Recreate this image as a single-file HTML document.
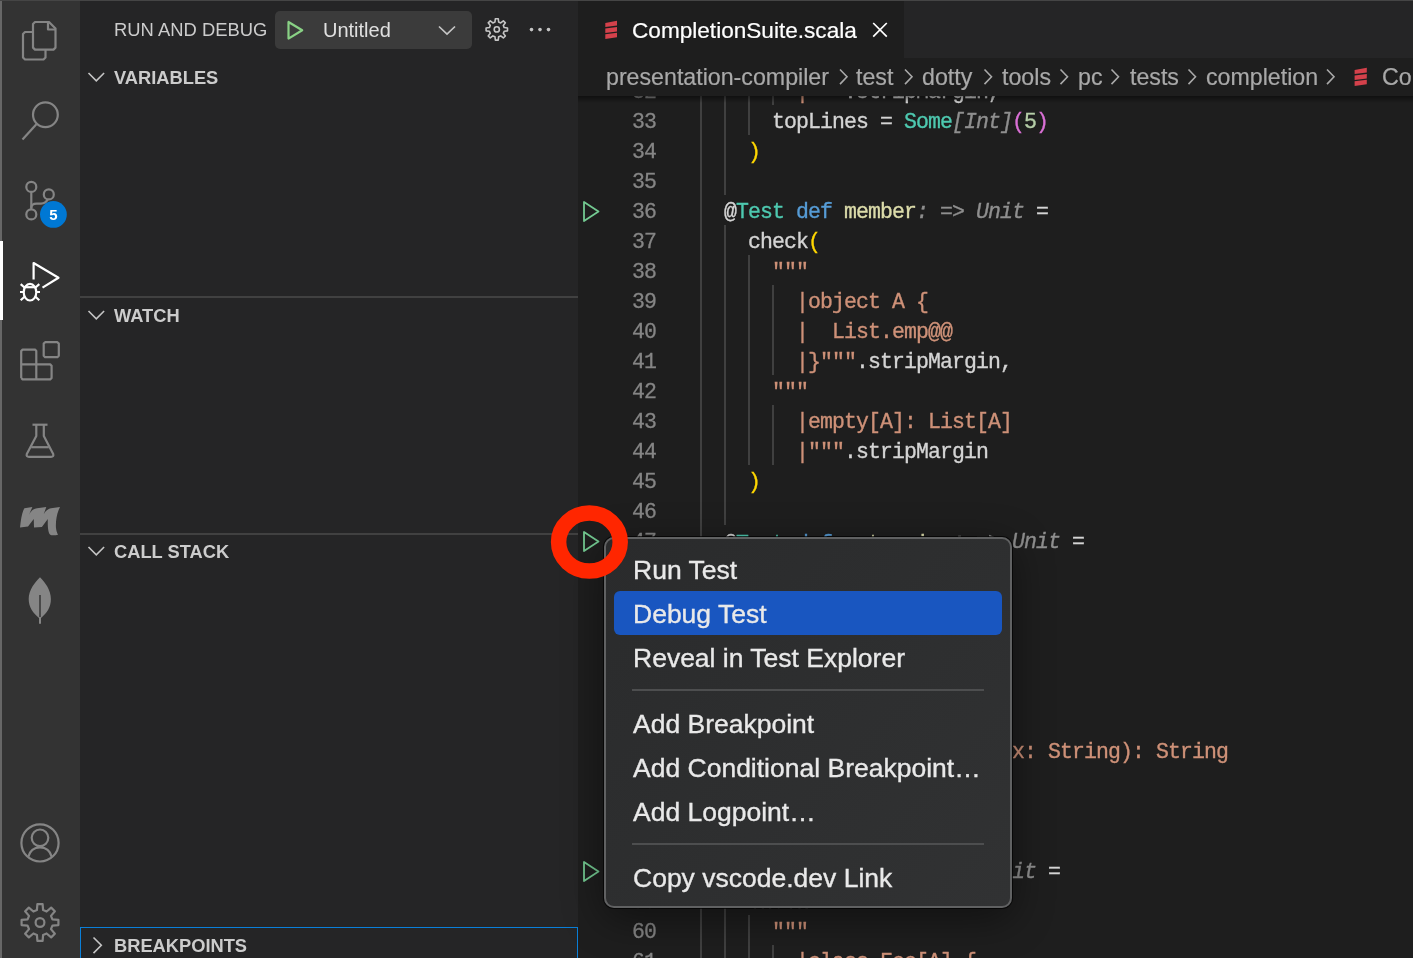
<!DOCTYPE html>
<html><head><meta charset="utf-8"><style>
*{margin:0;padding:0;box-sizing:border-box}
html,body{width:1413px;height:958px;overflow:hidden;background:#1e1e1e;font-family:"Liberation Sans",sans-serif;-webkit-font-smoothing:antialiased}
.a{position:absolute;white-space:pre;will-change:transform}
#act{left:0;top:0;width:80px;height:958px;background:#333333}
#actl{left:0;top:0;width:2px;height:958px;background:#676767}
#topl{left:0;top:0;width:1413px;height:1px;background:#454545;z-index:50}
#side{left:80px;top:0;width:498px;height:958px;background:#252526}
.hdr{font-weight:bold;color:#cccccc}
.sep{left:80px;width:498px;height:2px;background:#414141}
#tabs{left:578px;top:0;width:835px;height:58px;background:#252526}
#tab{left:578px;top:0;width:326px;height:58px;background:#1e1e1e}
#crumbs{left:578px;top:58px;width:835px;height:38px;background:#1e1e1e;z-index:3}
#shadow{left:578px;top:96px;width:835px;height:7px;z-index:3;background:linear-gradient(rgba(0,0,0,0.45),rgba(0,0,0,0))}
.bc{color:#a9a9a9;z-index:4;-webkit-text-stroke:0.2px currentColor}
.code{font-family:"Liberation Mono",monospace;color:#d4d4d4;-webkit-text-stroke:0.35px currentColor}
.ln{font-family:"Liberation Mono",monospace;color:#858585;-webkit-text-stroke:0.3px currentColor}
.g{width:2px;background:#404040;position:absolute}
.k{color:#569cd6}.t{color:#4ec9b0}.f{color:#dcdcaa}.s{color:#ce9178}.h{color:#8f8f8f;font-style:italic}.y{color:#ffd700}.p{color:#da70d6}.n{color:#b5cea8}
#menu{left:604px;top:537px;width:408px;height:371px;background:#2b2c2d;border:2px solid #606162;border-radius:10px;z-index:10;box-shadow:0 0 0 1px rgba(0,0,0,0.7),0 10px 40px rgba(0,0,0,0.45);background:linear-gradient(135deg,#2a2b2c,#313233)}
.mi{color:#e9e9e9;z-index:11;-webkit-text-stroke:0.35px currentColor}
.msep{width:352px;height:2px;background:#4d4e4f;z-index:11;position:absolute}
</style></head><body>
<div class="a" id="act"></div><div class="a" id="actl"></div><div class="a" id="topl"></div>
<div class="a" style="left:0;top:241px;width:3px;height:79px;background:#ffffff;z-index:2"></div>
<svg class="a" style="left:0;top:0;z-index:3" width="80" height="958" viewBox="0 0 80 958" fill="none" stroke="#858585" stroke-width="2.2" stroke-linejoin="round">
<!-- files -->
<path d="M33 24 L35 22 L49 22 L55.5 28.5 L55.5 47.6 L53.5 49.6 L35 49.6 L33 47.6 Z"/>
<path d="M48 22 L48 29.5 L55.5 29.5"/>
<path d="M33 32 L25 32 L23 34 L23 57.5 L25 59.5 L43.5 59.5 L45.5 57.5 L45.5 49.6"/>
<!-- search -->
<circle cx="45.4" cy="114.7" r="12.4"/>
<path d="M36.6 124 L22.5 139.4" stroke-linecap="butt"/>
<!-- scm -->
<circle cx="31.3" cy="186.9" r="5"/>
<circle cx="48.8" cy="194.4" r="5"/>
<circle cx="31.3" cy="214.4" r="5"/>
<path d="M31.3 191.9 L31.3 209.4"/>
<path d="M31.3 208 C31.3 205 33.5 203.6 36.5 203.6 L41 203.6 C44.5 203.6 46.5 202 47.8 199.3"/>
<!-- debug (active) -->
<g stroke="#ffffff">
<path d="M33.6 279.5 L33.6 263 L58.5 277.8 L42.5 287.6" stroke-linejoin="round"/>
<ellipse cx="30" cy="292.2" rx="6.3" ry="8.3"/>
<path d="M23.7 287.2 L36.3 287.2"/>
<path d="M20 292 L23.7 292 M36.3 292 L40 292"/>
<path d="M20.7 284.2 L24.5 287.5 M39.3 284.2 L35.5 287.5"/>
<path d="M20.7 300.2 L24.5 296.8 M39.3 300.2 L35.5 296.8"/>
</g>
<!-- extensions -->
<path d="M21.2 378 L21.2 351 L22.6 349.6 L35 349.6 L36.3 351 L36.3 379.4 M21.2 364.4 L50.2 364.4 L51.6 365.8 L51.6 378 L50.2 379.4 L22.6 379.4 L21.2 378"/>
<path d="M43.7 343.6 L45.1 342.2 L57.4 342.2 L58.8 343.6 L58.8 355.8 L57.4 357.2 L45.1 357.2 L43.7 355.8 Z"/>
<!-- beaker -->
<path d="M32.5 424.7 L47.5 424.7" stroke-linecap="butt"/>
<path d="M36.3 425 L36.3 436 L26.8 454 Q26 456.9 29 456.9 L51 456.9 Q54 456.9 53.2 454 L43.8 436 L43.8 425"/>
<path d="M31.2 447.2 L48.8 447.2"/>
<!-- account -->
<circle cx="40" cy="842.9" r="18.6"/>
<circle cx="40" cy="837.8" r="8.3"/>
<path d="M28.2 857 C30 850 34.5 847.3 40 847.3 C45.5 847.3 50 850 51.8 857"/>
</g>
<path d="M36.91 910.08 L37.38 904.09 L42.62 904.09 L43.09 910.08 L46.60 911.53 L51.17 907.63 L54.87 911.33 L50.97 915.90 L52.42 919.41 L58.41 919.88 L58.41 925.12 L52.42 925.59 L50.97 929.10 L54.87 933.67 L51.17 937.37 L46.60 933.47 L43.09 934.92 L42.62 940.91 L37.38 940.91 L36.91 934.92 L33.40 933.47 L28.83 937.37 L25.13 933.67 L29.03 929.10 L27.58 925.59 L21.59 925.12 L21.59 919.88 L27.58 919.41 L29.03 915.90 L25.13 911.33 L28.83 907.63 L33.40 911.53 Z"/>
<circle cx="40" cy="922.5" r="4.4"/>
<!-- metals -->
<path fill="#858585" stroke="none" d="M20 527.5 C21 519 22 512 24.4 508.2 L32.4 506.9 L29 514.7 C31 511 33 509 37 508.3 L46.3 506.9 L43.8 514 C45.5 511 47.5 509 51 508.2 L60 506.9 C56.5 514 55.5 522 56 528 C56.3 531 57 533 58 534.7 C55 535.6 51.5 535.6 50 534.5 C48 532.5 47.6 526 47.8 519 L41.9 526.9 L34 527.5 L33.75 519 L28 526.6 Z"/>
<!-- leaf -->
<path fill="#858585" stroke="none" d="M40 577.2 C35 582 28.7 590 28.7 599 C28.7 607 33 613 39 618 L39 623.8 L41 623.8 L41 618 C47 613 50.9 607 50.9 599 C50.9 590 45 582 40 577.2 Z"/>
<path d="M40 595 L40 617" stroke="#3a3a3a" stroke-width="1.6"/>
<!-- badge -->
<circle cx="53.4" cy="214.4" r="13.4" fill="#0078d4" stroke="none"/>
<text x="53.4" y="219.8" fill="#ffffff" stroke="none" font-family="Liberation Sans" font-weight="bold" font-size="15" text-anchor="middle">5</text>
</svg>

<div class="a" id="side"></div>
<div class="a " style="left:114px;top:21.22px;font-size:18.4px;line-height:18.4px;color:#cccccc">RUN AND DEBUG</div>
<div class="a" style="left:275px;top:11px;width:197px;height:38px;background:#3b3b3b;border-radius:5px"></div>
<div class="a " style="left:322.5px;top:19.87px;font-size:20px;line-height:20px;color:#e0e0e0">Untitled</div>
<svg class="a" style="left:80px;top:0;z-index:3" width="498" height="958" viewBox="80 0 498 958" fill="none" stroke="#c5c5c5" stroke-width="1.6" stroke-linejoin="miter">
<path d="M288.5 22 L288.5 38.6 L302.2 30.3 Z" stroke="#89d185" stroke-width="2.2" stroke-linejoin="round"/>
<path d="M439 26.5 L447 34 L455 26.5" stroke="#c5c5c5" stroke-width="1.7"/>
<path d="M494.97 22.02 L495.36 18.70 L498.24 18.70 L498.63 22.02 L500.72 22.89 L503.35 20.81 L505.39 22.85 L503.31 25.48 L504.18 27.57 L507.50 27.96 L507.50 30.84 L504.18 31.23 L503.31 33.32 L505.39 35.95 L503.35 37.99 L500.72 35.91 L498.63 36.78 L498.24 40.10 L495.36 40.10 L494.97 36.78 L492.88 35.91 L490.25 37.99 L488.21 35.95 L490.29 33.32 L489.42 31.23 L486.10 30.84 L486.10 27.96 L489.42 27.57 L490.29 25.48 L488.21 22.85 L490.25 20.81 L492.88 22.89 Z" stroke="#c5c5c5" stroke-width="1.6" stroke-linejoin="round"/>
<circle cx="496.8" cy="29.4" r="2.6" stroke-width="1.6"/>
<circle cx="531.5" cy="29.6" r="1.8" fill="#c5c5c5" stroke="none"/>
<circle cx="540" cy="29.6" r="1.8" fill="#c5c5c5" stroke="none"/>
<circle cx="548.5" cy="29.6" r="1.8" fill="#c5c5c5" stroke="none"/>
<path d="M88.5 73 L96.3 80.8 L104.1 73"/>
<path d="M88.5 311 L96.3 318.8 L104.1 311"/>
<path d="M88.5 547 L96.3 554.8 L104.1 547"/>
<path d="M93.5 937.5 L101.3 945.3 L93.5 953.1"/>
</svg>

<div class="a hdr" style="left:114px;top:68.51px;font-size:18.3px;line-height:18.3px;">VARIABLES</div>
<div class="a sep" style="top:296px"></div>
<div class="a hdr" style="left:114px;top:306.51px;font-size:18.3px;line-height:18.3px;">WATCH</div>
<div class="a sep" style="top:533px"></div>
<div class="a hdr" style="left:114px;top:542.51px;font-size:18.3px;line-height:18.3px;">CALL STACK</div>
<div class="a" style="left:80px;top:927px;width:498px;height:40px;border:1.6px solid #0a7fd8"></div>
<div class="a hdr" style="left:114px;top:936.51px;font-size:18.3px;line-height:18.3px;">BREAKPOINTS</div>
<div class="a" id="tabs"></div><div class="a" id="tab"></div>
<div class="a " style="left:632px;top:20.07px;font-size:22.6px;line-height:22.6px;color:#ffffff;-webkit-text-stroke:0.2px #ffffff">CompletionSuite.scala</div>
<div class="a" id="crumbs"></div><div class="a" id="shadow"></div>
<div class="a bc" style="left:605.5px;top:65.96px;font-size:23.2px;line-height:23.2px;">presentation-compiler</div>
<div class="a bc" style="left:856.4px;top:65.96px;font-size:23.2px;line-height:23.2px;">test</div>
<div class="a bc" style="left:921.5px;top:65.96px;font-size:23.2px;line-height:23.2px;">dotty</div>
<div class="a bc" style="left:1001.5px;top:65.96px;font-size:23.2px;line-height:23.2px;">tools</div>
<div class="a bc" style="left:1077.5px;top:65.96px;font-size:23.2px;line-height:23.2px;">pc</div>
<div class="a bc" style="left:1129.6px;top:65.96px;font-size:23.2px;line-height:23.2px;">tests</div>
<div class="a bc" style="left:1205.9px;top:65.96px;font-size:23.2px;line-height:23.2px;">completion</div>
<div class="a bc" style="left:1381.5px;top:65.96px;font-size:23.2px;line-height:23.2px;">CompletionSuite.scala</div>
<svg class="a" style="left:578px;top:0;z-index:4" width="835" height="958" viewBox="578 0 835 958" fill="none" stroke="#c5c5c5" stroke-width="1.6">
<g fill="#d4414b" stroke="none">
<path d="M605.3 23.1 L617 20.8 L617 25.6 L605.3 27.1 Z"/>
<path d="M605.3 28.5 L617 26.9 L617 31.5 L605.3 32.9 Z"/>
<path d="M605.3 34.2 L617 32.8 L617 37.3 L605.3 38.9 Z"/>
</g>
<path d="M873.2 23 L886.8 36.6 M886.8 23 L873.2 36.6" stroke="#ffffff" stroke-width="1.7"/>
<g stroke="#a9a9a9" stroke-width="1.6">
<path d="M840 69.5 L847 76.8 L840 84.1"/>
<path d="M905 69.5 L912 76.8 L905 84.1"/>
<path d="M984.5 69.5 L991.5 76.8 L984.5 84.1"/>
<path d="M1060.5 69.5 L1067.5 76.8 L1060.5 84.1"/>
<path d="M1111.5 69.5 L1118.5 76.8 L1111.5 84.1"/>
<path d="M1188.5 69.5 L1195.5 76.8 L1188.5 84.1"/>
<path d="M1327 69.5 L1334 76.8 L1327 84.1"/>
</g>
<g fill="#d4414b" stroke="none">
<path d="M1354.6 70.1 L1366.8 67.8 L1366.8 72.6 L1354.6 74.1 Z"/>
<path d="M1354.6 75.5 L1366.8 73.9 L1366.8 78.5 L1354.6 79.9 Z"/>
<path d="M1354.6 81.2 L1366.8 79.8 L1366.8 84.3 L1354.6 85.9 Z"/>
</g>
</svg>
<svg class="a" style="left:578px;top:0;z-index:2" width="80" height="958" viewBox="578 0 80 958" fill="none" stroke="#73c991" stroke-width="1.8" stroke-linejoin="round">
<path d="M584 202 L584 221 L598.5 211.5 Z"/>
<path d="M584 532 L584 551 L598.5 541.5 Z"/>
<path d="M584 862 L584 881 L598.5 871.5 Z"/>
</svg>

<div class="g" style="left:700px;top:75px;height:30px"></div>
<div class="g" style="left:724px;top:75px;height:30px"></div>
<div class="g" style="left:748px;top:75px;height:30px"></div>
<div class="g" style="left:772px;top:75px;height:30px"></div>
<div class="g" style="left:700px;top:105px;height:30px"></div>
<div class="g" style="left:724px;top:105px;height:30px"></div>
<div class="g" style="left:748px;top:105px;height:30px"></div>
<div class="g" style="left:700px;top:135px;height:30px"></div>
<div class="g" style="left:724px;top:135px;height:30px"></div>
<div class="g" style="left:700px;top:165px;height:30px"></div>
<div class="g" style="left:724px;top:165px;height:30px"></div>
<div class="g" style="left:700px;top:195px;height:30px"></div>
<div class="g" style="left:700px;top:225px;height:30px"></div>
<div class="g" style="left:724px;top:225px;height:30px"></div>
<div class="g" style="left:700px;top:255px;height:30px"></div>
<div class="g" style="left:724px;top:255px;height:30px"></div>
<div class="g" style="left:748px;top:255px;height:30px"></div>
<div class="g" style="left:700px;top:285px;height:30px"></div>
<div class="g" style="left:724px;top:285px;height:30px"></div>
<div class="g" style="left:748px;top:285px;height:30px"></div>
<div class="g" style="left:772px;top:285px;height:30px"></div>
<div class="g" style="left:700px;top:315px;height:30px"></div>
<div class="g" style="left:724px;top:315px;height:30px"></div>
<div class="g" style="left:748px;top:315px;height:30px"></div>
<div class="g" style="left:772px;top:315px;height:30px"></div>
<div class="g" style="left:700px;top:345px;height:30px"></div>
<div class="g" style="left:724px;top:345px;height:30px"></div>
<div class="g" style="left:748px;top:345px;height:30px"></div>
<div class="g" style="left:772px;top:345px;height:30px"></div>
<div class="g" style="left:700px;top:375px;height:30px"></div>
<div class="g" style="left:724px;top:375px;height:30px"></div>
<div class="g" style="left:748px;top:375px;height:30px"></div>
<div class="g" style="left:700px;top:405px;height:30px"></div>
<div class="g" style="left:724px;top:405px;height:30px"></div>
<div class="g" style="left:748px;top:405px;height:30px"></div>
<div class="g" style="left:772px;top:405px;height:30px"></div>
<div class="g" style="left:700px;top:435px;height:30px"></div>
<div class="g" style="left:724px;top:435px;height:30px"></div>
<div class="g" style="left:748px;top:435px;height:30px"></div>
<div class="g" style="left:772px;top:435px;height:30px"></div>
<div class="g" style="left:700px;top:465px;height:30px"></div>
<div class="g" style="left:724px;top:465px;height:30px"></div>
<div class="g" style="left:700px;top:495px;height:30px"></div>
<div class="g" style="left:724px;top:495px;height:30px"></div>
<div class="g" style="left:700px;top:525px;height:30px"></div>
<div class="g" style="left:700px;top:555px;height:30px"></div>
<div class="g" style="left:724px;top:555px;height:30px"></div>
<div class="g" style="left:700px;top:585px;height:30px"></div>
<div class="g" style="left:724px;top:585px;height:30px"></div>
<div class="g" style="left:748px;top:585px;height:30px"></div>
<div class="g" style="left:700px;top:615px;height:30px"></div>
<div class="g" style="left:724px;top:615px;height:30px"></div>
<div class="g" style="left:748px;top:615px;height:30px"></div>
<div class="g" style="left:772px;top:615px;height:30px"></div>
<div class="g" style="left:700px;top:645px;height:30px"></div>
<div class="g" style="left:724px;top:645px;height:30px"></div>
<div class="g" style="left:748px;top:645px;height:30px"></div>
<div class="g" style="left:772px;top:645px;height:30px"></div>
<div class="g" style="left:700px;top:675px;height:30px"></div>
<div class="g" style="left:724px;top:675px;height:30px"></div>
<div class="g" style="left:748px;top:675px;height:30px"></div>
<div class="g" style="left:772px;top:675px;height:30px"></div>
<div class="g" style="left:700px;top:705px;height:30px"></div>
<div class="g" style="left:724px;top:705px;height:30px"></div>
<div class="g" style="left:748px;top:705px;height:30px"></div>
<div class="g" style="left:772px;top:705px;height:30px"></div>
<div class="g" style="left:700px;top:735px;height:30px"></div>
<div class="g" style="left:724px;top:735px;height:30px"></div>
<div class="g" style="left:748px;top:735px;height:30px"></div>
<div class="g" style="left:772px;top:735px;height:30px"></div>
<div class="g" style="left:700px;top:765px;height:30px"></div>
<div class="g" style="left:724px;top:765px;height:30px"></div>
<div class="g" style="left:748px;top:765px;height:30px"></div>
<div class="g" style="left:772px;top:765px;height:30px"></div>
<div class="g" style="left:700px;top:855px;height:30px"></div>
<div class="g" style="left:700px;top:885px;height:30px"></div>
<div class="g" style="left:724px;top:885px;height:30px"></div>
<div class="g" style="left:700px;top:915px;height:30px"></div>
<div class="g" style="left:724px;top:915px;height:30px"></div>
<div class="g" style="left:748px;top:915px;height:30px"></div>
<div class="g" style="left:700px;top:945px;height:30px"></div>
<div class="g" style="left:724px;top:945px;height:30px"></div>
<div class="g" style="left:748px;top:945px;height:30px"></div>
<div class="g" style="left:772px;top:945px;height:30px"></div>
<div class="a ln" style="left:632.0px;top:81.93px;font-size:21.5px;line-height:21.5px;letter-spacing:-0.90px">32</div>
<div class="a code s" style="left:795.55px;top:81.93px;font-size:21.5px;line-height:21.5px;letter-spacing:-0.90px">|</div>
<div class="a code s" style="left:807.55px;top:81.93px;font-size:21.5px;line-height:21.5px;letter-spacing:-0.90px">"""</div>
<div class="a code " style="left:843.55px;top:81.93px;font-size:21.5px;line-height:21.5px;letter-spacing:-0.90px">.stripMargin,</div>
<div class="a ln" style="left:632.0px;top:111.93px;font-size:21.5px;line-height:21.5px;letter-spacing:-0.90px">33</div>
<div class="a code " style="left:771.55px;top:111.93px;font-size:21.5px;line-height:21.5px;letter-spacing:-0.90px">topLines = </div>
<div class="a code t" style="left:903.55px;top:111.93px;font-size:21.5px;line-height:21.5px;letter-spacing:-0.90px">Some</div>
<div class="a code h" style="left:951.55px;top:111.93px;font-size:21.5px;line-height:21.5px;letter-spacing:-0.90px">[Int]</div>
<div class="a code p" style="left:1011.55px;top:111.93px;font-size:21.5px;line-height:21.5px;letter-spacing:-0.90px">(</div>
<div class="a code n" style="left:1023.55px;top:111.93px;font-size:21.5px;line-height:21.5px;letter-spacing:-0.90px">5</div>
<div class="a code p" style="left:1035.55px;top:111.93px;font-size:21.5px;line-height:21.5px;letter-spacing:-0.90px">)</div>
<div class="a ln" style="left:632.0px;top:141.93px;font-size:21.5px;line-height:21.5px;letter-spacing:-0.90px">34</div>
<div class="a code y" style="left:747.55px;top:141.93px;font-size:21.5px;line-height:21.5px;letter-spacing:-0.90px">)</div>
<div class="a ln" style="left:632.0px;top:171.93px;font-size:21.5px;line-height:21.5px;letter-spacing:-0.90px">35</div>
<div class="a ln" style="left:632.0px;top:201.93px;font-size:21.5px;line-height:21.5px;letter-spacing:-0.90px">36</div>
<div class="a code " style="left:723.55px;top:201.93px;font-size:21.5px;line-height:21.5px;letter-spacing:-0.90px">@</div>
<div class="a code t" style="left:735.55px;top:201.93px;font-size:21.5px;line-height:21.5px;letter-spacing:-0.90px">Test</div>
<div class="a code k" style="left:795.55px;top:201.93px;font-size:21.5px;line-height:21.5px;letter-spacing:-0.90px">def</div>
<div class="a code f" style="left:843.55px;top:201.93px;font-size:21.5px;line-height:21.5px;letter-spacing:-0.90px">member</div>
<div class="a code h" style="left:915.55px;top:201.93px;font-size:21.5px;line-height:21.5px;letter-spacing:-0.90px">: =&gt; Unit</div>
<div class="a code " style="left:1023.55px;top:201.93px;font-size:21.5px;line-height:21.5px;letter-spacing:-0.90px"> =</div>
<div class="a ln" style="left:632.0px;top:231.93px;font-size:21.5px;line-height:21.5px;letter-spacing:-0.90px">37</div>
<div class="a code " style="left:747.55px;top:231.93px;font-size:21.5px;line-height:21.5px;letter-spacing:-0.90px">check</div>
<div class="a code y" style="left:807.55px;top:231.93px;font-size:21.5px;line-height:21.5px;letter-spacing:-0.90px">(</div>
<div class="a ln" style="left:632.0px;top:261.93px;font-size:21.5px;line-height:21.5px;letter-spacing:-0.90px">38</div>
<div class="a code s" style="left:771.55px;top:261.93px;font-size:21.5px;line-height:21.5px;letter-spacing:-0.90px">"""</div>
<div class="a ln" style="left:632.0px;top:291.93px;font-size:21.5px;line-height:21.5px;letter-spacing:-0.90px">39</div>
<div class="a code s" style="left:795.55px;top:291.93px;font-size:21.5px;line-height:21.5px;letter-spacing:-0.90px">|object A {</div>
<div class="a ln" style="left:632.0px;top:321.93px;font-size:21.5px;line-height:21.5px;letter-spacing:-0.90px">40</div>
<div class="a code s" style="left:795.55px;top:321.93px;font-size:21.5px;line-height:21.5px;letter-spacing:-0.90px">|  List.emp@@</div>
<div class="a ln" style="left:632.0px;top:351.93px;font-size:21.5px;line-height:21.5px;letter-spacing:-0.90px">41</div>
<div class="a code s" style="left:795.55px;top:351.93px;font-size:21.5px;line-height:21.5px;letter-spacing:-0.90px">|}"""</div>
<div class="a code " style="left:855.55px;top:351.93px;font-size:21.5px;line-height:21.5px;letter-spacing:-0.90px">.stripMargin,</div>
<div class="a ln" style="left:632.0px;top:381.93px;font-size:21.5px;line-height:21.5px;letter-spacing:-0.90px">42</div>
<div class="a code s" style="left:771.55px;top:381.93px;font-size:21.5px;line-height:21.5px;letter-spacing:-0.90px">"""</div>
<div class="a ln" style="left:632.0px;top:411.93px;font-size:21.5px;line-height:21.5px;letter-spacing:-0.90px">43</div>
<div class="a code s" style="left:795.55px;top:411.93px;font-size:21.5px;line-height:21.5px;letter-spacing:-0.90px">|empty[A]: List[A]</div>
<div class="a ln" style="left:632.0px;top:441.93px;font-size:21.5px;line-height:21.5px;letter-spacing:-0.90px">44</div>
<div class="a code s" style="left:795.55px;top:441.93px;font-size:21.5px;line-height:21.5px;letter-spacing:-0.90px">|"""</div>
<div class="a code " style="left:843.55px;top:441.93px;font-size:21.5px;line-height:21.5px;letter-spacing:-0.90px">.stripMargin</div>
<div class="a ln" style="left:632.0px;top:471.93px;font-size:21.5px;line-height:21.5px;letter-spacing:-0.90px">45</div>
<div class="a code y" style="left:747.55px;top:471.93px;font-size:21.5px;line-height:21.5px;letter-spacing:-0.90px">)</div>
<div class="a ln" style="left:632.0px;top:501.93px;font-size:21.5px;line-height:21.5px;letter-spacing:-0.90px">46</div>
<div class="a ln" style="left:632.0px;top:531.93px;font-size:21.5px;line-height:21.5px;letter-spacing:-0.90px">47</div>
<div class="a code " style="left:723.55px;top:533.93px;font-size:21.5px;line-height:21.5px;letter-spacing:-0.90px">@</div>
<div class="a code t" style="left:735.55px;top:533.93px;font-size:21.5px;line-height:21.5px;letter-spacing:-0.90px">Test</div>
<div class="a code k" style="left:795.55px;top:533.93px;font-size:21.5px;line-height:21.5px;letter-spacing:-0.90px">def</div>
<div class="a code f" style="left:843.55px;top:533.93px;font-size:21.5px;line-height:21.5px;letter-spacing:-0.90px">extension</div>
<div class="a code h" style="left:951.55px;top:531.93px;font-size:21.5px;line-height:21.5px;letter-spacing:-0.90px">: =&gt; Unit</div>
<div class="a code " style="left:1059.55px;top:531.93px;font-size:21.5px;line-height:21.5px;letter-spacing:-0.90px"> =</div>
<div class="a ln" style="left:632.0px;top:561.93px;font-size:21.5px;line-height:21.5px;letter-spacing:-0.90px">48</div>
<div class="a code " style="left:747.55px;top:561.93px;font-size:21.5px;line-height:21.5px;letter-spacing:-0.90px">check</div>
<div class="a code y" style="left:807.55px;top:561.93px;font-size:21.5px;line-height:21.5px;letter-spacing:-0.90px">(</div>
<div class="a ln" style="left:632.0px;top:591.93px;font-size:21.5px;line-height:21.5px;letter-spacing:-0.90px">49</div>
<div class="a code s" style="left:771.55px;top:591.93px;font-size:21.5px;line-height:21.5px;letter-spacing:-0.90px">"""</div>
<div class="a ln" style="left:632.0px;top:621.93px;font-size:21.5px;line-height:21.5px;letter-spacing:-0.90px">50</div>
<div class="a code s" style="left:795.55px;top:621.93px;font-size:21.5px;line-height:21.5px;letter-spacing:-0.90px">|object A {</div>
<div class="a ln" style="left:632.0px;top:651.93px;font-size:21.5px;line-height:21.5px;letter-spacing:-0.90px">51</div>
<div class="a code s" style="left:795.55px;top:651.93px;font-size:21.5px;line-height:21.5px;letter-spacing:-0.90px">|  given Foo[A]</div>
<div class="a ln" style="left:632.0px;top:681.93px;font-size:21.5px;line-height:21.5px;letter-spacing:-0.90px">52</div>
<div class="a code s" style="left:795.55px;top:681.93px;font-size:21.5px;line-height:21.5px;letter-spacing:-0.90px">|    def foo: Int</div>
<div class="a ln" style="left:632.0px;top:711.93px;font-size:21.5px;line-height:21.5px;letter-spacing:-0.90px">53</div>
<div class="a code s" style="left:795.55px;top:711.93px;font-size:21.5px;line-height:21.5px;letter-spacing:-0.90px">|</div>
<div class="a ln" style="left:632.0px;top:741.93px;font-size:21.5px;line-height:21.5px;letter-spacing:-0.90px">54</div>
<div class="a code s" style="left:795.55px;top:741.93px;font-size:21.5px;line-height:21.5px;letter-spacing:-0.90px">|  def extensions(x: String): String</div>
<div class="a ln" style="left:632.0px;top:771.93px;font-size:21.5px;line-height:21.5px;letter-spacing:-0.90px">55</div>
<div class="a code s" style="left:795.55px;top:771.93px;font-size:21.5px;line-height:21.5px;letter-spacing:-0.90px">|}</div>
<div class="a ln" style="left:632.0px;top:801.93px;font-size:21.5px;line-height:21.5px;letter-spacing:-0.90px">56</div>
<div class="a ln" style="left:632.0px;top:831.93px;font-size:21.5px;line-height:21.5px;letter-spacing:-0.90px">57</div>
<div class="a ln" style="left:632.0px;top:861.93px;font-size:21.5px;line-height:21.5px;letter-spacing:-0.90px">58</div>
<div class="a code " style="left:723.55px;top:861.93px;font-size:21.5px;line-height:21.5px;letter-spacing:-0.90px">@</div>
<div class="a code t" style="left:735.55px;top:861.93px;font-size:21.5px;line-height:21.5px;letter-spacing:-0.90px">Test</div>
<div class="a code k" style="left:795.55px;top:861.93px;font-size:21.5px;line-height:21.5px;letter-spacing:-0.90px">def</div>
<div class="a code f" style="left:843.55px;top:861.93px;font-size:21.5px;line-height:21.5px;letter-spacing:-0.90px">members</div>
<div class="a code h" style="left:927.55px;top:861.93px;font-size:21.5px;line-height:21.5px;letter-spacing:-0.90px">: =&gt; Unit</div>
<div class="a code " style="left:1035.55px;top:861.93px;font-size:21.5px;line-height:21.5px;letter-spacing:-0.90px"> =</div>
<div class="a ln" style="left:632.0px;top:891.93px;font-size:21.5px;line-height:21.5px;letter-spacing:-0.90px">59</div>
<div class="a code " style="left:747.55px;top:891.93px;font-size:21.5px;line-height:21.5px;letter-spacing:-0.90px">check</div>
<div class="a ln" style="left:632.0px;top:921.93px;font-size:21.5px;line-height:21.5px;letter-spacing:-0.90px">60</div>
<div class="a code s" style="left:771.55px;top:921.93px;font-size:21.5px;line-height:21.5px;letter-spacing:-0.90px">"""</div>
<div class="a ln" style="left:632.0px;top:951.93px;font-size:21.5px;line-height:21.5px;letter-spacing:-0.90px">61</div>
<div class="a code s" style="left:795.55px;top:951.93px;font-size:21.5px;line-height:21.5px;letter-spacing:-0.90px">|class Foo[A] {</div>
<div class="a" id="menu"></div>
<div class="a" style="left:614px;top:591px;width:388px;height:44px;background:#1956c0;border-radius:6px;z-index:11"></div>
<div class="a mi" style="left:633px;top:556.57px;font-size:26.5px;line-height:26.5px;">Run Test</div>
<div class="a mi" style="left:633px;top:600.57px;font-size:26.5px;line-height:26.5px;">Debug Test</div>
<div class="a mi" style="left:633px;top:644.57px;font-size:26.5px;line-height:26.5px;">Reveal in Test Explorer</div>
<div class="a mi" style="left:633px;top:710.57px;font-size:26.5px;line-height:26.5px;">Add Breakpoint</div>
<div class="a mi" style="left:633px;top:754.57px;font-size:26.5px;line-height:26.5px;">Add Conditional Breakpoint…</div>
<div class="a mi" style="left:633px;top:798.57px;font-size:26.5px;line-height:26.5px;">Add Logpoint…</div>
<div class="a mi" style="left:633px;top:864.57px;font-size:26.5px;line-height:26.5px;">Copy vscode.dev Link</div>
<div class="msep" style="left:632px;top:689px"></div>
<div class="msep" style="left:632px;top:843px"></div>
<svg class="a" style="left:540px;top:495px;z-index:30" width="100" height="100" viewBox="540 495 100 100">
<ellipse cx="589.4" cy="542.1" rx="30.8" ry="29" fill="none" stroke="#ff2600" stroke-width="15.5"/>
</svg>

</body></html>
